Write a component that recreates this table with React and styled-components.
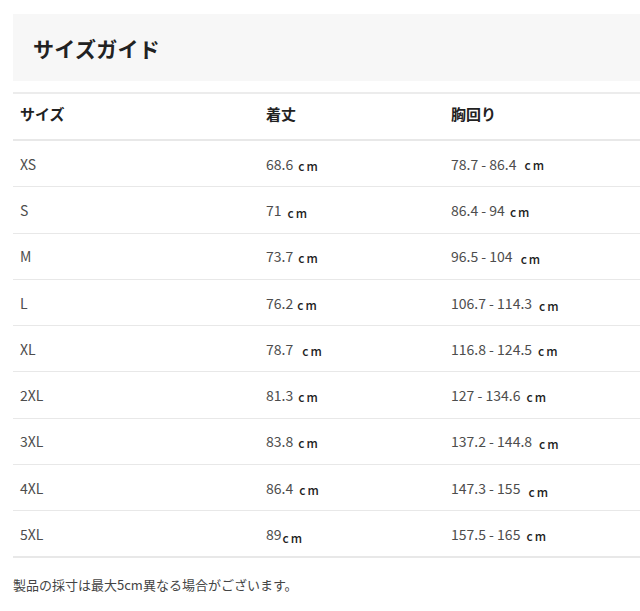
import React from "react"
import styled, { createGlobalStyle } from "styled-components"

const GlobalStyle = createGlobalStyle`
  body {
    margin: 0;
    background: #fff;
    font-family: "Noto Sans CJK JP", "Noto Sans", sans-serif;
  }
`

const Page = styled.div`
  padding: 14px 0 0 13px;
`

const TitleBar = styled.div`
  background: #f7f7f7;
  height: 67px;
  display: flex;
  align-items: center;
  padding-left: 20px;
`

const Title = styled.h2`
  margin: 0;
  font-size: 21px;
  font-weight: 700;
  color: #222;
  letter-spacing: 0.3px;
`

const Table = styled.div`
  margin-top: 11px;
  border-top: 2px solid #ececec;
`

const Row = styled.div`
  display: grid;
  grid-template-columns: 246px 185px 1fr;
  align-items: center;
  box-sizing: border-box;
  height: ${({ $head }) => ($head ? "47px" : "46.3px")};
  padding: ${({ $head }) => ($head ? "0 0 6px 7px" : "0 0 0 7px")};
  border-bottom: ${({ $thick }) => ($thick ? "2px" : "1px")} solid #e8e8e8;
`

const HeadCell = styled.div`
  font-size: 15px;
  font-weight: 700;
  color: #222;
`

const Cell = styled.div`
  font-size: 14px;
  color: #4d4d4d;
  white-space: pre;
`

const Unit = styled.span`
  display: inline-block;
  margin-left: ${({ $gap }) => $gap}px;
  font-size: 12px;
  font-weight: 500;
  letter-spacing: 2px;
  color: #222;
  transform: translateY(${({ $drop }) => $drop}px);
`

const Note = styled.p`
  margin: 17px 0 0;
  font-size: 13px;
  color: #444;
`

const rows = [
  ["XS", "68.6", 5, 1, "78.7 - 86.4", 8, 0],
  ["S", "71", 6, 2, "86.4 - 94", 5, 1],
  ["M", "73.7", 5, 1, "96.5 - 104", 8, 2],
  ["L", "76.2", 4, 1, "106.7 - 114.3", 7, 2],
  ["XL", "78.7", 9, 1, "116.8 - 124.5", 6, 1],
  ["2XL", "81.3", 5, 1, "127 - 134.6", 6, 1],
  ["3XL", "83.8", 5, 1, "137.2 - 144.8", 7, 2],
  ["4XL", "86.4", 6, 1, "147.3 - 155", 8, 3],
  ["5XL", "89", 1, 3, "157.5 - 165", 6, 1],
]

export default function App() {
  return (
    <Page>
      <GlobalStyle />
      <TitleBar>
        <Title>サイズガイド</Title>
      </TitleBar>
      <Table>
        <Row $head $thick>
          <HeadCell>サイズ</HeadCell>
          <HeadCell>着丈</HeadCell>
          <HeadCell>胸回り</HeadCell>
        </Row>
        {rows.map(([size, len, g1, d1, chest, g2, d2], i) => (
          <Row key={size} $thick={i === rows.length - 1}>
            <Cell>{size}</Cell>
            <Cell>
              {len}
              <Unit $gap={g1} $drop={d1}>cm</Unit>
            </Cell>
            <Cell>
              {chest}
              <Unit $gap={g2} $drop={d2}>cm</Unit>
            </Cell>
          </Row>
        ))}
      </Table>
      <Note>製品の採寸は最大5cm異なる場合がございます。</Note>
    </Page>
  )
}
